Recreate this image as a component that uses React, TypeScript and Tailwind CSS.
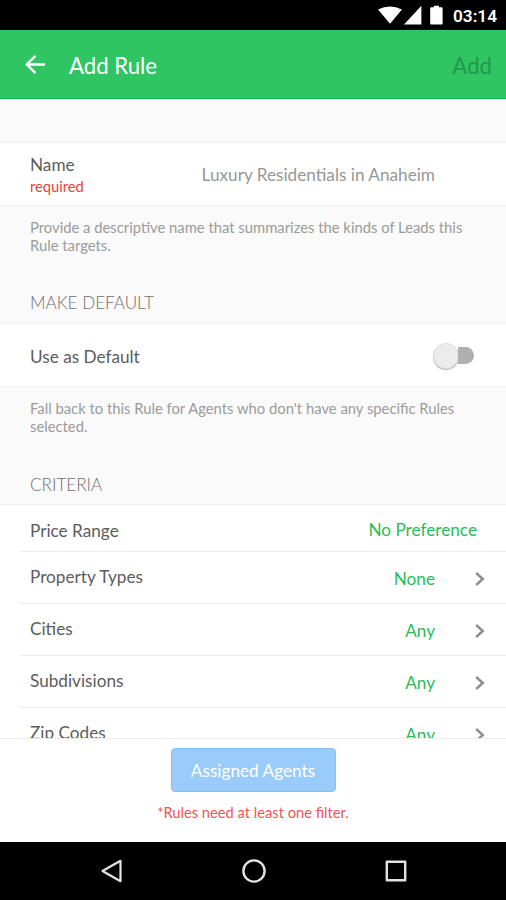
import type { ReactNode } from "react";

type CriteriaRowProps = {
   label: string;
   value: string;
};

const criteria: CriteriaRowProps[] = [
   { label: "Property Types", value: "None" },
   { label: "Cities", value: "Any" },
   { label: "Subdivisions", value: "Any" },
   { label: "Zip Codes", value: "Any" }
];

function StatusBar() {
   return (
      <div className="flex h-[30px] shrink-0 items-center justify-end bg-black pr-[9px] text-white">
         <svg className="h-[30px] w-[66px]" viewBox="0 0 66 30" fill="currentColor">
            <path d="M0 9.4Q12 3.4 24 9.4L12 23.8Z" />
            <path d="M43.4 5.8V24.4H26Z" />
            <path d="M55.8 5.7h5.2v1.6h2.6q1 0 1 1v15.2q0 1-1 1h-10.4q-1 0-1-1V8.3q0-1 1-1h2.6z" />
         </svg>
         <span className="ml-[9px] w-[44px] whitespace-nowrap pt-px font-['Roboto',sans-serif] text-[17.2px] font-semibold leading-[30px]">
            03:14
         </span>
      </div>
   );
}

function Header() {
   return (
      <header className="flex h-[69px] shrink-0 items-center border-b border-[#17b84b] bg-[#2fc562] pr-[14px] pl-[25px] text-[22.2px] text-white">
         <svg
            className="size-[21px]"
            viewBox="0 0 21 21"
            fill="none"
            stroke="currentColor"
            strokeWidth="2.4"
         >
            <path d="M20 10.5H2M10.5 1.8 1.8 10.5l8.7 8.7" />
         </svg>
         <h1 className="ml-[23px] pt-[4px] leading-[30px]">Add Rule</h1>
         <button type="button" disabled className="ml-auto pt-[4px] leading-[30px] text-[#23984a]">
            Add
         </button>
      </header>
   );
}

function Hint({ children }: { children: ReactNode }) {
   return <p className="px-[30px] text-[14.8px] leading-[18px] text-[#9b9b9b]">{children}</p>;
}

function SectionTitle({ children }: { children: ReactNode }) {
   return <h2 className="px-[30px] text-[17.1px] leading-5 font-light text-[#6f6f6f]">{children}</h2>;
}

function Chevron() {
   return (
      <svg
         className="mt-[2px] h-[14px] w-[10px]"
         viewBox="0 0 10 14"
         fill="none"
         stroke="#8d8d8d"
         strokeWidth="2.4"
      >
         <path d="M1.2 1 7.8 7l-6.6 6" />
      </svg>
   );
}

function CriteriaRow({ label, value }: CriteriaRowProps) {
   return (
      <div className="ml-5 flex h-[52px] shrink-0 items-center border-b border-[#ececec] pr-[21px] pl-[10px]">
         <span className="pb-px">{label}</span>
         <span className="mr-[40px] ml-auto pt-[2px] text-[#28bd58]">{value}</span>
         <Chevron />
      </div>
   );
}

function Footer() {
   return (
      <footer className="flex h-[104px] shrink-0 flex-col items-center border-t border-[#ececec] bg-white pt-[9px]">
         <button
            type="button"
            disabled
            className="h-[44px] w-[165px] rounded-[4px] border border-[#86bff2] bg-[#99cbfb] pt-[2px] text-[17.2px] text-white"
         >
            Assigned Agents
         </button>
         <p className="mt-[10px] text-[14.7px] leading-5 text-[#ee5555]">*Rules need at least one filter.</p>
      </footer>
   );
}

function NavBar() {
   return (
      <nav className="flex h-[58px] shrink-0 items-center justify-between bg-black pr-[98px] pl-[100px] text-[#e4e4e4]">
         <svg className="size-[24px]" viewBox="0 0 24 24" fill="none" stroke="currentColor" strokeWidth="2.2" strokeLinejoin="round">
            <path d="M20.5 1.8v20.4L2.5 12z" />
         </svg>
         <svg className="size-[24px]" viewBox="0 0 24 24" fill="none" stroke="currentColor" strokeWidth="2.4">
            <circle cx="12" cy="12" r="10.6" />
         </svg>
         <svg className="size-[24px]" viewBox="0 0 24 24" fill="none" stroke="currentColor" strokeWidth="2.4" strokeLinejoin="round">
            <rect x="2.8" y="2.8" width="18.4" height="18.4" />
         </svg>
      </nav>
   );
}

export default function App() {
   return (
      <div className="flex h-[900px] w-[506px] flex-col overflow-hidden bg-white font-['Lato',sans-serif] text-[17.2px] leading-5 text-[#5c5c5c]">
         <StatusBar />
         <Header />
         <main className="flex min-h-0 flex-1 flex-col overflow-hidden bg-[#fafafa]">
            <section className="flex h-[204px] shrink-0 flex-col pt-[43px]">
               <div className="flex h-[64px] shrink-0 items-center border-y border-[#f0f0f0] bg-white px-[30px]">
                  <div className="pt-[2px]">
                     <div>Name</div>
                     <div className="mt-px text-[14.7px] text-[#ee4040]">required</div>
                  </div>
                  <div className="mr-[41px] ml-auto pt-[2px] text-[#979797]">Luxury Residentials in Anaheim</div>
               </div>
               <div className="mt-[12px]">
                  <Hint>
                     Provide a descriptive name that summarizes the kinds of Leads this
                     <br />
                     Rule targets.
                  </Hint>
               </div>
               <div className="mt-[39px]">
                  <SectionTitle>MAKE DEFAULT</SectionTitle>
               </div>
            </section>

            <section className="flex h-[181px] shrink-0 flex-col pt-[20px]">
               <div className="flex h-[64px] shrink-0 items-center justify-between border-y border-[#f0f0f0] bg-white pr-[32px] pl-[30px]">
                  <span className="pt-[3px]">Use as Default</span>
                  <button
                     type="button"
                     role="switch"
                     aria-checked="false"
                     aria-label="Use as Default"
                     className="mt-px flex h-[26px] w-[41px] items-center"
                  >
                     <span className="size-[26px] shrink-0 rounded-full border border-[#dedede] bg-[#ececec] shadow-[0_1px_1px_#bbb]" />
                     <span className="-ml-px h-[17px] flex-1 rounded-r-full bg-[#b0b0b0]" />
                  </button>
               </div>
               <div className="mt-[12px]">
                  <Hint>
                     Fall back to this Rule for Agents who don't have any specific Rules
                     <br />
                     selected.
                  </Hint>
               </div>
               <div className="mt-[40px]">
                  <SectionTitle>CRITERIA</SectionTitle>
               </div>
            </section>

            <section className="mt-[20px] flex shrink-0 flex-col border-t border-[#f0f0f0] bg-white">
               <div className="ml-5 flex h-[47px] shrink-0 items-center border-b border-[#ececec] pr-[29px] pl-[10px]">
                  <span className="pt-[5px]">Price Range</span>
                  <span className="ml-auto pt-[3px] text-[#28bd58]">No Preference</span>
               </div>
               {criteria.map((row) => (
                  <CriteriaRow key={row.label} {...row} />
               ))}
            </section>
         </main>
         <Footer />
         <NavBar />
      </div>
   );
}
